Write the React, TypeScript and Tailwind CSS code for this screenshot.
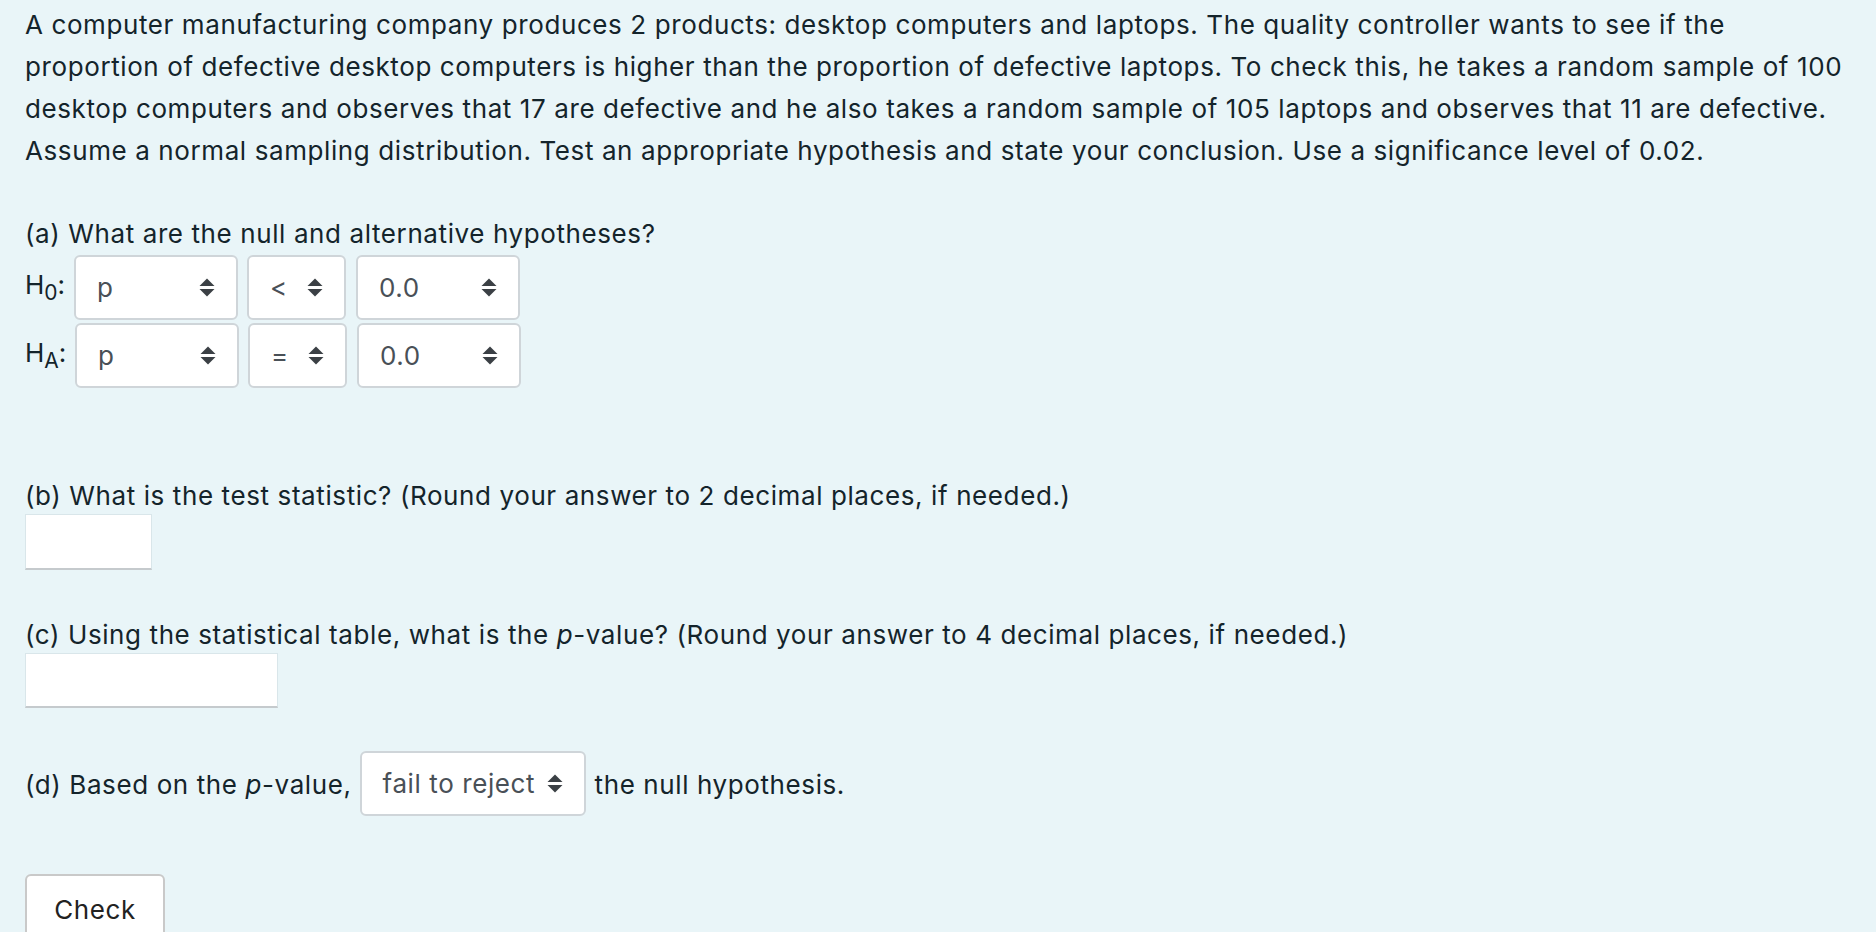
import React from "react";

const Arrows = () => (
  <svg width="16" height="19" viewBox="0 0 16 19" className="shrink-0">
    <polygon points="8,0.5 15.5,8 0.5,8" fill="#3b4045" />
    <polygon points="0.5,11 15.5,11 8,18.5" fill="#3b4045" />
  </svg>
);

const Select = ({ label, w }: { label: string; w: string }) => (
  <div
    className={`${w} h-[65px] bg-white border-2 border-[#cfd5d9] rounded-[6px] flex items-center justify-between pl-[21px] pr-[21px] text-[#495057]`}
  >
    <span className="leading-none">{label}</span>
    <Arrows />
  </div>
);

export default function App() {
  return (
    <div
      className="min-h-[932px] w-full bg-[#e9f5f8] text-[#14242b] text-[26px] tracking-[0.6px] px-[25px] pt-[4px] overflow-hidden"
      style={{ fontFamily: "Inter, 'Noto Sans', sans-serif" }}
    >
      <p className="leading-[42px] m-0 pr-[4px]">
        A computer manufacturing company produces 2 products: desktop computers and laptops. The quality controller
        wants to see if the proportion of defective desktop computers is higher than the proportion of defective
        laptops. To check this, he takes a random sample of 100 desktop computers and observes that 17 are defective
        and he also takes a random sample of 105 laptops and observes that 11 are defective. Assume a normal sampling
        distribution. Test an appropriate hypothesis and state your conclusion. Use a significance level of 0.02.
      </p>

      <div className="mt-[44px] leading-[36px]">(a) What are the null and alternative hypotheses?</div>

      <div className="mt-[3px] flex items-center">
        <div className="w-[49px] leading-none tracking-normal">
          H<span className="text-[21px] align-sub">0</span>:
        </div>
        <Select label="p" w="w-[164px]" />
        <div className="w-[9px]" />
        <Select label="<" w="w-[99px]" />
        <div className="w-[10px]" />
        <Select label="0.0" w="w-[164px]" />
      </div>

      <div className="mt-[3px] flex items-center">
        <div className="w-[50px] leading-none tracking-normal">
          H<span className="text-[21px] align-sub">A</span>:
        </div>
        <Select label="p" w="w-[164px]" />
        <div className="w-[9px]" />
        <Select label="=" w="w-[99px]" />
        <div className="w-[10px]" />
        <Select label="0.0" w="w-[164px]" />
      </div>

      <div className="mt-[90px] leading-[36px]">
        (b) What is the test statistic? (Round your answer to 2 decimal places, if needed.)
      </div>
      <div className="w-[127px] h-[56px] bg-white border border-[#d9e6ea] border-b-2 border-b-[#c5cacd]" />

      <div className="mt-[47px] leading-[36px]">
        (c) Using the statistical table, what is the <i>p</i>-value? (Round your answer to 4 decimal places, if
        needed.)
      </div>
      <div className="w-[253px] h-[55px] bg-white border border-[#d9e6ea] border-b-2 border-b-[#c5cacd]" />

      <div className="mt-[43px] flex items-center">
        <span className="leading-[36px] pt-[3px]">
          (d) Based on the <i>p</i>-value,
        </span>
        <div className="w-[8px]" />
        <div className="w-[226px] h-[65px] bg-white border-2 border-[#cfd5d9] rounded-[6px] flex items-center pl-[21px] pr-[21px] text-[#495057]">
          <span className="leading-none whitespace-nowrap">fail to reject</span>
          <div className="flex-1 min-w-[10px]" />
          <Arrows />
        </div>
        <div className="w-[9px]" />
        <span className="leading-[36px] pt-[3px]">the null hypothesis.</span>
      </div>

      <button className="mt-[58px] w-[140px] h-[72px] bg-white border-2 border-[#c9c9c9] rounded-[6px] text-[#222] text-[26px] tracking-[0.6px] leading-none">
        Check
      </button>
    </div>
  );
}
